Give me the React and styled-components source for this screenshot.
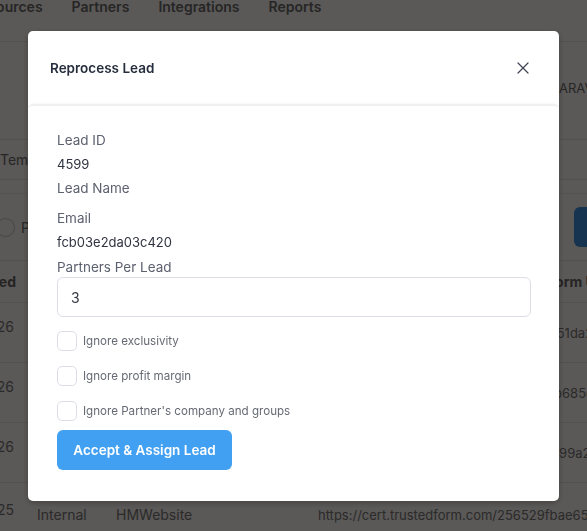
import React from 'react'
import styled, { createGlobalStyle } from 'styled-components'

const GlobalStyle = createGlobalStyle`
  html, body {
    margin: 0;
    padding: 0;
    background: #fbf8f5;
    font-family: Inter, "Noto Sans", "Liberation Sans", sans-serif;
    -webkit-font-smoothing: antialiased;
  }
  * { box-sizing: border-box; }
`

/* ---------- page behind the dialog ---------- */

const Page = styled.div`
  width: 100vw;
  height: 531px;
  overflow: hidden;
  position: relative;
`

const Nav = styled.nav`
  height: 42px;
  display: flex;
  gap: 29px;
  margin-left: -13px;
  border-bottom: 1px solid #e6e3e0;
`

const NavLink = styled.span`
  font-size: 14px;
  font-weight: 600;
  line-height: 14px;
  color: #6e6a68;
`

const TitleBar = styled.div`
  height: 98px;
  display: flex;
  align-items: center;
  padding-left: 559px;
  padding-bottom: 6px;
  border-bottom: 1px solid #e6e3e0;
  font-size: 13px;
  color: #6e6a68;
  white-space: nowrap;
`

const Tabs = styled.div`
  height: 40px;
  display: flex;
  align-items: center;
  border-bottom: 1px solid #e6e3e0;
  font-size: 14px;
  color: #6e6a68;
  white-space: nowrap;
`

const Filters = styled.div`
  height: 67px;
  display: flex;
  align-items: center;
  border-top: 1px solid #ece9e6;
  margin-top: 13px;
  margin-left: -4px;
  gap: 6px;
  font-size: 14px;
  color: #6e6a68;
  white-space: nowrap;
`

const Radio = styled.span`
  width: 19px;
  height: 19px;
  border-radius: 50%;
  border: 1px solid #c9c5c2;
  flex: none;
`

const FilterButton = styled.span`
  margin-left: auto;
  width: 60px;
  height: 40px;
  margin-right: -47px;
  border-radius: 6px;
  background: #3f8fe0;
  flex: none;
`

const Table = styled.div`
  display: grid;
  grid-template-columns: 97px 79px 202px 400px;
  margin-left: -60px;
  font-size: 14px;
  color: #7a7674;
  white-space: nowrap;
`

const HeadCell = styled.div`
  height: 43px;
  display: flex;
  align-items: center;
  justify-content: ${p => (p.end ? 'flex-end' : 'flex-start')};
  padding-right: ${p => (p.end ? '21px' : '0')};
  padding-left: ${p => p.indent || 0}px;
  border-top: 1px solid #e6e3e0;
  border-bottom: 1px solid #e6e3e0;
  font-weight: 700;
  color: #6a6664;
`

const Cell = styled.div`
  height: 60px;
  display: flex;
  flex-direction: column;
  justify-content: center;
  align-items: ${p => (p.end ? 'flex-end' : 'flex-start')};
  padding-right: ${p => (p.end ? '23px' : '0')};
  padding-top: ${p => (p.low ? '4px' : '0')};
  border-bottom: 1px solid #e6e3e0;
  line-height: 18px;
  font-size: ${p => (p.url ? '13px' : 'inherit')};
`

const DateLine = styled.span`
  margin-top: ${p => (p.low ? '-6px' : '-12px')};
`

const rows = [
  { date: '01/06/2026', type: 'Internal', site: 'HMWebsite', url: 'https://cert.trustedform.com/8c1e04d751da2e9c07' },
  { date: '01/06/2026', type: 'Internal', site: 'HMWebsite', url: 'https://cert.trustedform.com/f03a91c2b685d10a93' },
  { date: '01/05/2026', type: 'Internal', site: 'HMWebsite', url: 'https://cert.trustedform.com/4ab7e05999a2c81f46' },
  { date: '12/31/2025', type: 'Internal', site: 'HMWebsite', url: 'https://cert.trustedform.com/256529fbae65a4d9c3e10' }
]

function Background () {
  return (
    <Page>
      <Nav>
        <NavLink>Sources</NavLink>
        <NavLink>Partners</NavLink>
        <NavLink>Integrations</NavLink>
        <NavLink>Reports</NavLink>
      </Nav>
      <TitleBar>ARAVIND</TitleBar>
      <Tabs>Templates</Tabs>
      <Filters>
        <Radio />
        <span>Pending</span>
        <FilterButton />
      </Filters>
      <Table>
        <HeadCell end>Created</HeadCell>
        <HeadCell>Type</HeadCell>
        <HeadCell>Source</HeadCell>
        <HeadCell indent={173}>Trusted Form URL</HeadCell>
        {rows.map((r, i) => {
          const low = i === rows.length - 1
          return (
            <React.Fragment key={i}>
              <Cell end><DateLine low={low}>{r.date}</DateLine></Cell>
              <Cell low={low}>{r.type}</Cell>
              <Cell low={low}>{r.site}</Cell>
              <Cell low={low} url>{r.url}</Cell>
            </React.Fragment>
          )
        })}
      </Table>
    </Page>
  )
}

/* ---------- dialog ---------- */

const Overlay = styled.div`
  position: fixed;
  inset: 0;
  background: rgba(0, 0, 0, 0.645);
  display: flex;
  align-items: flex-start;
  padding: 31px 0 0 28px;
`

const Dialog = styled.div`
  width: 531px;
  background: #fff;
  border-radius: 5px;
  box-shadow: 0 2px 6px rgba(0, 0, 0, 0.25);
  overflow: hidden;
`

const Header = styled.div`
  height: 73px;
  display: flex;
  align-items: center;
  justify-content: space-between;
  padding: 0 29px 0 22px;
`

const Title = styled.h2`
  margin: 0;
  font-size: 13.5px;
  font-weight: 600;
  color: #262e3d;
`

const CloseButton = styled.button`
  border: 0;
  background: none;
  padding: 0;
  width: 14px;
  height: 14px;
  display: flex;
  align-items: center;
  justify-content: center;
  color: #3d4350;
  cursor: pointer;
`

const Body = styled.div`
  border-top: 2px solid #f0f0f1;
  border-radius: 5px 5px 0 0;
  box-shadow: 0 -1px 2px rgba(0, 0, 0, 0.03);
  padding: 24px 28px 31px 29px;
  display: flex;
  flex-direction: column;
  align-items: flex-start;
`

const Label = styled.div`
  font-size: 13.5px;
  line-height: 20px;
  color: #5c6170;
  margin-top: ${p => p.gap || 0}px;
`

const Value = styled.div`
  font-size: 13px;
  line-height: 20px;
  color: #2f3340;
  margin-top: 4px;
  min-height: ${p => (p.empty ? '2px' : '20px')};
`

const NumberInput = styled.input`
  width: 100%;
  height: 40px;
  border: 1px solid #dcdde7;
  border-radius: 6px;
  padding: 0 13px;
  font: inherit;
  font-size: 14px;
  color: #333845;
  outline: none;
`

const Checks = styled.div`
  display: flex;
  flex-direction: column;
  gap: 15px;
  margin-top: 14px;
`

const CheckRow = styled.label`
  display: flex;
  align-items: center;
  gap: 6px;
  font-size: 11.6px;
  color: #666a74;
  cursor: pointer;
`

const Box = styled.input.attrs({ type: 'checkbox' })`
  appearance: none;
  margin: 0;
  width: 20px;
  height: 20px;
  border: 1px solid #dddde8;
  border-radius: 5px;
  background: #fff;
`

const PrimaryButton = styled.button`
  margin-top: 9px;
  width: 175px;
  height: 40px;
  border: 0;
  border-radius: 6px;
  background: #42a0f2;
  color: #fff;
  font: inherit;
  font-size: 13.5px;
  font-weight: 600;
  cursor: pointer;
`

function CloseIcon () {
  return (
    <svg width='12' height='12' viewBox='0 0 12 12' fill='none' stroke='currentColor' strokeWidth='1.2' strokeLinecap='round'>
      <path d='M1 1l10 10M11 1L1 11' />
    </svg>
  )
}

const options = [
  'Ignore exclusivity',
  'Ignore profit margin',
  "Ignore Partner's company and groups"
]

export default function App () {
  return (
    <>
      <GlobalStyle />
      <Background />
      <Overlay>
        <Dialog>
          <Header>
            <Title>Reprocess Lead</Title>
            <CloseButton aria-label='Close'><CloseIcon /></CloseButton>
          </Header>
          <Body>
            <Label>Lead ID</Label>
            <Value>4599</Value>
            <Label gap={4}>Lead Name</Label>
            <Value empty />
            <Label gap={4}>Email</Label>
            <Value>fcb03e2da03c420</Value>
            <Label gap={5}>Partners Per Lead</Label>
            <NumberInput defaultValue='3' />
            <Checks>
              {options.map(o => (
                <CheckRow key={o}>
                  <Box />
                  {o}
                </CheckRow>
              ))}
            </Checks>
            <PrimaryButton>Accept &amp; Assign Lead</PrimaryButton>
          </Body>
        </Dialog>
      </Overlay>
    </>
  )
}
